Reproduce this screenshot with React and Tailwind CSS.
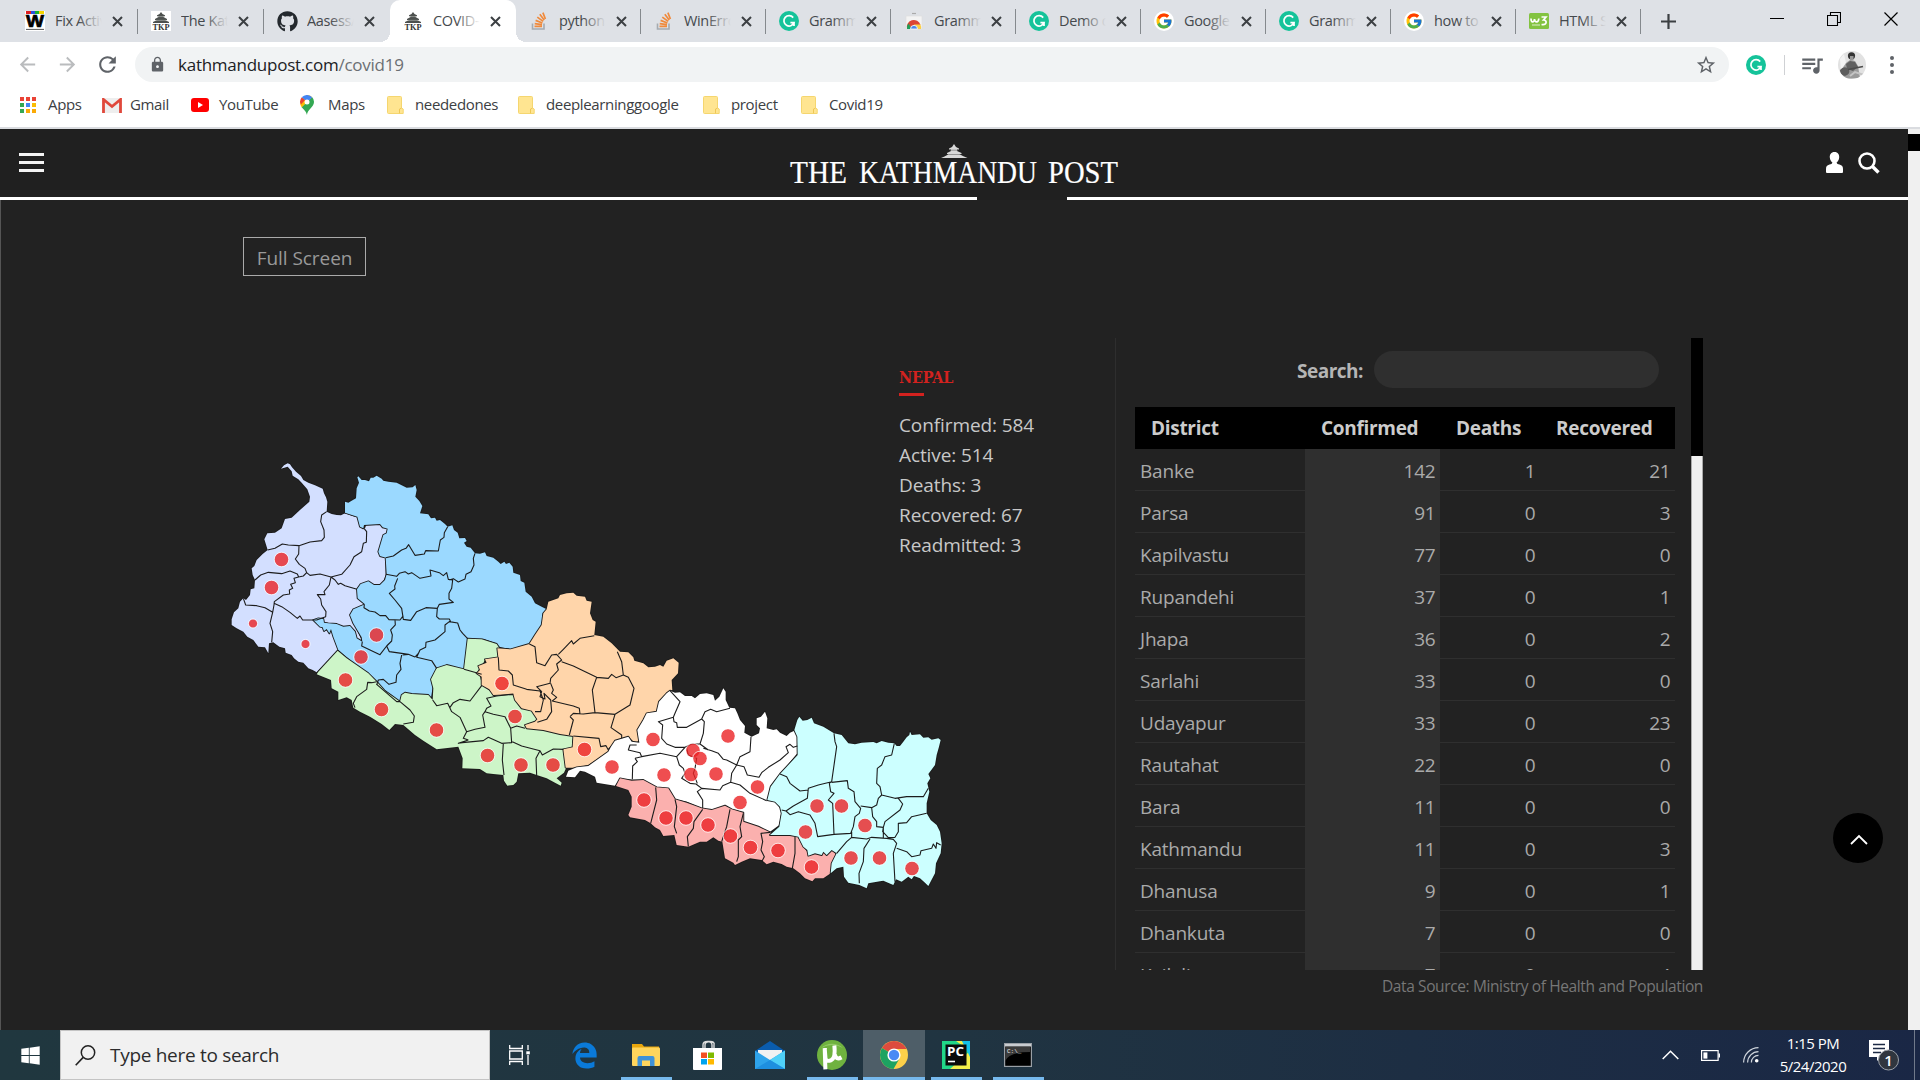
import React from "react";
import { FaGithub, FaEdgeLegacy, FaWindows } from "react-icons/fa6";
import { FcGoogle } from "react-icons/fc";
import { MdQueueMusic, MdLock, MdRefresh, MdStarBorder, MdArrowBack, MdArrowForward } from "react-icons/md";

const UI = "font-['Open_Sans','Noto_Sans',sans-serif]";

function Grammarly() {
  return (
    <svg width="20" height="20" viewBox="0 0 20 20">
      <circle cx="10" cy="10" r="10" fill="#15c39a" />
      <path d="M14.2 6.6A5.2 5.2 0 1 0 15 11.6H11.4M15 11.6V15" fill="none" stroke="#fff" strokeWidth="1.7" />
    </svg>
  );
}

function Stack() {
  return (
    <svg width="18" height="20" viewBox="0 0 18 20">
      <path d="M2.5 12.5V18H14V12.5" fill="none" stroke="#a5abb1" strokeWidth="1.6" />
      <path d="M4.5 15.4H12M4.7 12.6L12 13.6M5.6 9.4L12.4 12M7.3 6.1L13.2 10.4M9.8 3.3L14.2 9M12.9 1.6L15.4 8" stroke="#f08a3c" strokeWidth="1.7" />
    </svg>
  );
}

function Pagoda({ boxed }) {
  return (
    <svg width="20" height="20" viewBox="0 0 20 20">
      {boxed && <rect width="20" height="20" fill="#fff" />}
      <path d="M8.5 3L10 1L11.5 3L14 4.2V5.2H12.5V6L16 8V9H14L18 11V12H2V11L6 9H4V8L7.5 6V5.2H6V4.2Z" fill="#4c504e" />
      <path d="M7 5.6H13M5 9.4H15" stroke="#b5b8b6" strokeWidth=".6" />
      <text x="10" y="18.6" textAnchor="middle" textLength="17" lengthAdjust="spacingAndGlyphs" fontSize="8.5" fontFamily="Liberation Serif, serif" fontWeight="700" fill="#333">TKP</text>
    </svg>
  );
}

function WFavicon() {
  return (
    <svg width="20" height="20" viewBox="0 0 20 20">
      <rect width="20" height="20" fill="#fff" />
      <path d="M1 0H6V3H1Z" fill="#e02020" />
      <path d="M6 0H10V3H6Z" fill="#2b50e0" />
      <path d="M10 0H14V3H10Z" fill="#18b030" />
      <path d="M14 0H19V3H14Z" fill="#f4d500" />
      <path d="M1 18.4H19" stroke="#555" strokeWidth="1" />
      <text x="10" y="15.6" textAnchor="middle" fontSize="17" textLength="18" lengthAdjust="spacingAndGlyphs" fontFamily="Liberation Sans, sans-serif" fontWeight="700" stroke="#000" strokeWidth=".7">W</text>
    </svg>
  );
}

function WebStore() {
  return (
    <svg width="18" height="20" viewBox="0 0 18 20">
      <path d="M7 2.5H11" stroke="#aaa" strokeWidth="1.2" />
      <path d="M1 5H17V18H1Z" fill="#f3f3f3" stroke="#ddd" strokeWidth=".6" />
      <path d="M2 18A7 7 0 0 1 15.5 14L9 14Z" fill="#dc4535" />
      <path d="M2 18A7 7 0 0 1 3.4 12.5L7 18Z" fill="#1fa05a" />
      <path d="M9 13.5H15.4A7 7 0 0 1 16 18H10Z" fill="#fcd045" />
      <path d="M5.5 18A3.5 3.6 0 0 1 12.5 18Z" fill="#4a85ea" stroke="#fff" strokeWidth=".8" />
    </svg>
  );
}

function GoogleIcon() {
  return (
    <div className="flex size-5 items-center justify-center rounded-full bg-white">
      <FcGoogle size={18} />
    </div>
  );
}

function W3() {
  return (
    <svg width="20" height="20" viewBox="0 0 20 20">
      <rect y="2" width="20" height="16" rx="1.5" fill="#83c341" />
      <path d="M2 7.5C2 12 5 12 5.5 8C6 12 9.5 12 9.8 7.5M12.5 6H17L14.5 9C18.5 9 18 14.5 12.5 13.5" fill="none" stroke="#fff" strokeWidth="1.7" />
      <path d="M3 14H11" stroke="#dff0cc" strokeWidth="1" />
    </svg>
  );
}

const TABS = [
  ["Fix Activ", <WFavicon />],
  ["The Kath", <Pagoda boxed />],
  ["Aasess/", <FaGithub size={21} color="#24292e" />],
  ["COVID-", <Pagoda />, true],
  ["python -", <Stack />],
  ["WinErro", <Stack />],
  ["Gramm", <Grammarly />],
  ["Gramm", <WebStore />],
  ["Demo d", <Grammarly />],
  ["Google", <GoogleIcon />],
  ["Gramm", <Grammarly />],
  ["how to", <GoogleIcon />],
  ["HTML St", <W3 />],
];

function Cross() {
  return (
    <svg width="11" height="11" viewBox="0 0 11 11" className="shrink-0">
      <path d="M1 1L10 10M10 1L1 10" stroke="#3c4043" strokeWidth="2" />
    </svg>
  );
}

function TabStrip() {
  return (
    <div className="flex h-[42px] bg-[#dee1e6]">
      <div className="flex pl-3">
        {TABS.map(([title, icon, active], i) => {
          const fade = active ? "to-white" : "to-[#dee1e6]";
          const width = i < 4 ? "w-[126px]" : "w-[125px]";
          return (
            <div key={i} className={`relative flex shrink-0 items-center pl-3 ${width} ${active ? "rounded-t-[10px] bg-white" : ""}`}>
              {active && (
                <>
                  <div className="absolute bottom-0 -left-2.5 size-2.5 bg-[radial-gradient(circle_at_0_0,transparent_10px,white_10px)]" />
                  <div className="absolute -right-2.5 bottom-0 size-2.5 bg-[radial-gradient(circle_at_100%_0,transparent_10px,white_10px)]" />
                </>
              )}
              <div className="flex w-[22px] justify-center">{icon}</div>
              <div className="relative ml-[9px] w-[47px] overflow-hidden text-[14.5px] tracking-[-0.35px] whitespace-nowrap text-[#45494d]">
                {title}
                <div className={`absolute inset-y-0 right-0 w-6 bg-gradient-to-r from-transparent ${fade}`} />
              </div>
              <div className="ml-[10px]"><Cross /></div>
              {!active && i !== 2 && <div className="absolute right-0 h-[25px] w-px bg-[#85898d]" />}
            </div>
          );
        })}
      </div>
      <div className="flex flex-1 items-center">
        <svg width="17" height="17" viewBox="0 0 17 17" className="ml-[19px]">
          <path d="M8.5 1V16M1 8.5H16" stroke="#3c4043" strokeWidth="2.2" />
        </svg>
        <div className="mr-[22px] mb-[5px] ml-auto flex items-center gap-[43px]">
          <svg width="14" height="14" viewBox="0 0 14 14"><path d="M0 6.5H14" stroke="#000" /></svg>
          <svg width="14" height="14" viewBox="0 0 14 14"><path d="M.5 3.5H10.5V13.5H.5ZM3.5 3V.5H13.5V10.5H11" fill="none" stroke="#000" strokeWidth="1.1" /></svg>
          <svg width="14" height="14" viewBox="0 0 14 14"><path d="M.5 .5L13.5 13.5M13.5 .5L.5 13.5" stroke="#000" strokeWidth="1.2" /></svg>
        </div>
      </div>
    </div>
  );
}

function Avatar() {
  return (
    <svg width="28" height="28" viewBox="0 0 28 28">
      <defs><clipPath id="av"><circle cx="14" cy="14" r="14" /></clipPath></defs>
      <g clipPath="url(#av)">
        <rect width="28" height="28" fill="#e2e2e2" />
        <path d="M2 8L6 3L8 12L3 20Z" fill="#f3f3f3" />
        <path d="M5 28L4 18L8 12L12 9L17 10L20 15L22 27Z" fill="#9a9a9a" />
        <path d="M8 13L12 10L17 11L20 16L15 20L9 18Z" fill="#606060" />
        <path d="M2 19Q6 14 11 18Q13 23 7 25Q2 24 2 19Z" fill="#5c5c5c" />
        <path d="M10 18.5L25 15.5" stroke="#4d4d4d" strokeWidth="1.6" />
        <path d="M12 25L17 21L26 24" stroke="#c4c4c4" strokeWidth="2" fill="none" />
        <circle cx="13.5" cy="4.8" r="3.6" fill="#353535" />
        <path d="M12 5H15.5V9.5H12Z" fill="#999" />
      </g>
    </svg>
  );
}

function Toolbar() {
  return (
    <div className="flex h-[45px] items-center bg-white pr-[26px] pl-4 text-[#5f6368]">
      <MdArrowBack size={23} color="#babcbe" />
      <MdArrowForward size={23} color="#babcbe" className="ml-[17px]" />
      <MdRefresh size={25} className="ml-4" />
      <div className="ml-[15px] flex h-[35px] w-[1594px] items-center rounded-full bg-[#f1f3f4] pr-3 pl-[14px]">
        <MdLock size={17} />
        <div className="ml-3 text-[17px] tracking-[-0.25px] text-[#202124]">
          kathmandupost.com<span className="text-[#6b6f73]">/covid19</span>
        </div>
        <MdStarBorder size={22} className="ml-auto" />
      </div>
      <div className="ml-[17px]"><Grammarly /></div>
      <div className="ml-[18px] h-5 w-px bg-[#cfd1d4]" />
      <MdQueueMusic size={26} className="ml-[14px]" />
      <div className="ml-[13px]"><Avatar /></div>
      <div className="ml-auto flex flex-col gap-[3px]">
        <div className="size-[4px] rounded-full bg-[#5f6368]" />
        <div className="size-[4px] rounded-full bg-[#5f6368]" />
        <div className="size-[4px] rounded-full bg-[#5f6368]" />
      </div>
    </div>
  );
}

function Folder() {
  return (
    <svg width="17" height="18" viewBox="0 0 17 18">
      <path d="M.5 1.5Q.5 .5 1.5 .5H13.5Q14.5 .5 14.5 1.5V12L16.2 13V17.5H1.5Q.5 17.5 .5 16.5Z" fill="#ffe591" stroke="#f5d66f" />
      <path d="M12.5 17.3V13L14.5 12.2" fill="none" stroke="#efc756" />
    </svg>
  );
}

function AppsIcon() {
  const colors = ["#ea4335", "#ea4335", "#ea4335", "#34a853", "#4285f4", "#fbbc04", "#34a853", "#fbaa05", "#fbaa05"];
  return (
    <div className="grid grid-cols-3 gap-[2px]">
      {colors.map((c, i) => <div key={i} className="size-[4px]" style={{ background: c }} />)}
    </div>
  );
}

const BOOKMARKS = [
  ["Apps", "w-[82px]", <AppsIcon />],
  ["Gmail", "w-[89px]", (
    <svg width="20" height="15" viewBox="0 0 20 15">
      <rect width="20" height="15" rx="1" fill="#eee" />
      <path d="M1.5 15V1.5L10 8.5L18.5 1.5V15" fill="none" stroke="#e0483b" strokeWidth="2.8" />
    </svg>
  )],
  ["YouTube", "w-[109px]", (
    <svg width="18" height="14" viewBox="0 0 18 14">
      <rect width="18" height="14" rx="3" fill="#f00" /><path d="M7 4V10L12 7Z" fill="#fff" />
    </svg>
  )],
  ["Maps", "w-[87px]", (
    <svg width="14" height="20" viewBox="0 0 14 20">
      <path d="M7 20C7 15 14 12 14 7A7 7 0 0 0 12 2L1.5 12C4 15 6 16 7 20Z" fill="#34a853" />
      <path d="M0 7Q0 10 1.8 12.3L12 2Q10 0 7 0L2 4Z" fill="#fbbc04" />
      <path d="M0 7A7 7 0 0 1 1.8 2.2L5 5L1 9.5Z" fill="#ea4335" />
      <path d="M1.8 2.3A7 7 0 0 1 12.2 2.3L9 5.5L5 5Z" fill="#4285f4" />
      <circle cx="7" cy="7" r="2.5" fill="#fff" />
    </svg>
  )],
  ["neededones", "w-[131px]", <Folder />],
  ["deeplearninggoogle", "w-[185px]", <Folder />],
  ["project", "w-[98px]", <Folder />],
  ["Covid19", "w-[98px]", <Folder />],
];

function Bookmarks() {
  return (
    <div className="flex h-[42px] items-center border-b-2 border-[#dadce0] bg-white pb-1 pl-5">
      {BOOKMARKS.map(([label, width, icon]) => (
        <div key={label} className={`flex items-center ${width}`}>
          <div className="flex w-7 shrink-0">{icon}</div>
          <div className="-mt-px mb-px text-[15px] tracking-[-0.35px] text-[#3c4043]">{label}</div>
        </div>
      ))}
    </div>
  );
}

function SiteHeader() {
  const word = { fontFamily: "Liberation Serif, serif", fill: "#fff", stroke: "#fff", strokeWidth: 0.2, fontSize: 32.5, lengthAdjust: "spacingAndGlyphs" };
  return (
    <div className="flex h-[71px] flex-col bg-[#202020]">
      <div className="flex h-[68px] items-center pr-7 pb-px pl-[19px]">
        <div className="flex w-[25px] flex-col gap-[5px]">
          <div className="h-[3px] bg-[#f4f4f4]" />
          <div className="h-[3px] bg-[#f4f4f4]" />
          <div className="h-[3px] bg-[#f4f4f4]" />
        </div>
        <svg width="330" height="42" viewBox="0 0 330 42" className="ml-[745px]">
          <path d="M163 5L165 2L167 5L170 6.5V7.5H168V9L172.5 11V12H170L175 14.5L178.5 16H152L155.500 14.500L160 12H158V11L162 9V7.500H160V6.500Z" fill="#d8d8d8" />
          <path d="M161 8.2H169M159.500 12.500H171" stroke="#777" strokeWidth=".7" />
          <text x="1" y="40.5" textLength="57" {...word}>THE</text>
          <text x="70" y="40.5" textLength="178" {...word}>KATHMANDU</text>
          <text x="259" y="40.5" textLength="70" {...word}>POST</text>
        </svg>
        <svg width="17" height="21" viewBox="0 0 17 21" className="ml-auto">
          <path d="M8.5 0C12 0 13.4 2.6 13.2 5.5C13 8 11.8 9.5 10.6 10.6C10.8 12 12 12.2 13.5 12.6C16 13.3 17 14.5 17 17V20Q17 21 16 21H1Q0 21 0 20V17C0 14.5 1 13.3 3.5 12.6C5 12.2 6.2 12 6.4 10.6C5.2 9.5 4 8 3.8 5.5C3.6 2.6 5 0 8.5 0Z" fill="#fff" />
        </svg>
        <svg width="22" height="22" viewBox="0 0 22 22" className="ml-[15px]">
          <circle cx="9" cy="9" r="7.5" fill="none" stroke="#fff" strokeWidth="2.6" />
          <path d="M14.5 14.5L20.5 20.5" stroke="#fff" strokeWidth="3.4" />
        </svg>
      </div>
      <div className="flex h-[3px] justify-between">
        <div className="w-[977px] bg-white" />
        <div className="w-[841px] bg-white" />
      </div>
    </div>
  );
}

/* Province outlines and district boundaries, three units to the pixel. */
const WEST = {
  sudurpashchim:
    "M183,56 L192,46 L203,40 L210,43 L216,52 L228,65 L243,78 L250,90 L265,98 L285,106 L308,116 L312,130 L318,142 L322,155 L320,185 L335,192 L350,195 L363,196 L375,190 L398,198 L415,203 L420,230 L435,235 L440,222 L480,221 L503,236 L500,250 L490,255 L476,305 L497,323 L497,375 L490,395 L480,405 L462,405 L445,394 L422,402 L411,418 L433,463 L400,478 L390,495 L427,575 L335,537 L340,560 L355,600 L290,667 L278,660 L265,655 L250,638 L235,635 L222,625 L215,615 L197,608 L195,595 L178,590 L160,577 L147,580 L145,610 L135,592 L115,590 L100,570 L82,560 L70,545 L50,535 L35,525 L35,508 L42,487 L55,475 L60,455 L70,445 L78,450 L90,435 L92,418 L103,415 L105,390 L98,375 L95,355 L103,348 L110,330 L128,312 L143,300 L133,268 L142,250 L165,248 L185,235 L195,207 L215,203 L240,180 L268,155 L270,140 L262,118 L245,98 L235,88 L218,77 L215,64 L203,50Z",
  karnali:
    "M375,155 L385,158 L395,152 L408,145 L410,115 L417,98 L412,82 L415,79 L425,90 L435,90 L447,94 L452,83 L460,83 L470,77 L485,86 L490,92 L505,95 L530,98 L560,113 L578,112 L586,105 L590,120 L586,140 L598,153 L607,168 L600,190 L625,193 L633,205 L645,203 L650,212 L660,210 L675,222 L683,230 L697,226 L702,240 L713,248 L718,265 L735,264 L740,273 L732,278 L740,290 L752,293 L765,310 L780,311 L795,307 L800,318 L820,323 L835,335 L842,342 L853,335 L858,342 L868,338 L878,350 L880,368 L900,375 L902,393 L913,398 L917,425 L935,440 L945,460 L965,470 L980,478 L968,490 L965,525 L945,555 L930,580 L900,592 L870,598 L838,590 L828,580 L790,566 L743,566 L732,658 L707,655 L680,645 L668,658 L650,655 L633,685 L638,712 L632,750 L600,738 L548,735 L540,755 L515,735 L470,705 L450,680 L355,600 L340,560 L333,537 L328,550 L320,537 L312,543 L308,532 L300,530 L280,510 L295,505 L310,507 L312,518 L325,520 L350,522 L370,530 L390,528 L405,545 L410,565 L427,575 L425,562 L400,520 L390,495 L400,478 L435,463 L413,445 L411,418 L422,402 L445,394 L462,405 L480,405 L495,390 L500,373 L497,323 L480,318 L475,305 L490,255 L500,250 L503,236 L488,232 L480,222 L432,225 L430,235 L420,230 L412,200 L375,188Z",
  lines:
    "M320,185 L305,195 L302,215 L312,240 L313,262 L305,272 L270,276 L237,287 L205,285 L187,282 L165,295 L143,300 M237,287 L236,312 L226,327 L238,343 L255,355 L260,368 L270,376 L300,372 L333,381 L365,373 L390,345 L402,320 L425,305 L430,280 L439,277 L440,245 L432,235 M105,390 L122,375 L145,367 L185,371 L210,363 L232,372 L236,381 L250,378 L260,368 M236,381 L222,385 L226,398 L212,403 L218,415 L208,420 L209,432 L190,435 L163,455 L162,465 M70,445 L77,465 L110,467 L135,473 L158,487 L150,520 L158,545 L155,577 M158,487 L162,465 M162,460 L185,470 L210,487 L232,505 L240,498 L248,510 L290,510 M333,381 L328,405 L312,425 L315,434 L292,434 L302,447 L305,465 L318,485 L317,500 L290,510 M333,381 L345,390 L355,403 L362,400 L375,407 L411,418 M497,323 L520,318 L545,300 L558,295 L566,284 L585,316 L613,312 L617,302 L655,303 L661,270 L672,262 L673,248 L683,230 M765,310 L760,325 L762,345 L753,365 L738,373 L735,387 L715,396 L700,386 L688,390 M498,373 L530,379 L538,370 L555,365 L565,372 L575,368 L600,385 L633,378 L630,360 L658,368 L670,377 L680,368 L685,388 L698,390 L695,415 L687,430 L687,447 L700,457 L658,463 L652,475 L618,473 L590,485 L572,511 L550,508 L545,475 L525,450 L508,430 L525,417 L524,408 L533,385 M433,463 L432,473 L448,483 L465,486 L480,497 L497,497 L507,509 L540,510 L550,497 M525,510 L526,525 L512,540 L517,555 L515,573 L500,588 L480,614 L425,588 L427,575 M500,588 L508,605 L545,610 L565,613 L585,621 L593,612 L590,622 L635,632 L650,655 M590,622 L600,600 L617,592 L618,577 L645,570 L675,545 L675,525 L688,515 L713,519 L720,540 L728,550 L743,566 M652,475 L650,500 L658,507 L688,507 L692,515 M545,615 L540,640 L543,658 L530,675 L528,697 L507,703 L490,688 L475,690 L470,705 M565,613 L548,615",
};

const MID = {
  lumbini:
    "M113,92 L140,115 L205,160 L230,185 L255,213 L300,245 L305,225 L315,218 L335,222 L385,225 L398,240 L400,205 L393,178 L410,145 L440,135 L492,148 L503,56 L545,58 L590,72 L598,85 L595,112 L555,118 L550,130 L535,150 L545,190 L580,222 L640,222 L645,240 L665,265 L705,275 L715,300 L675,315 L680,325 L730,330 L820,348 L815,385 L790,388 L800,440 L792,458 L770,475 L785,488 L782,497 L765,488 L740,475 L710,465 L690,458 L655,460 L650,485 L640,495 L622,497 L612,482 L610,465 L580,462 L560,460 L540,447 L487,445 L488,415 L475,380 L410,388 L370,362 L345,345 L310,315 L285,312 L268,330 L245,312 L210,290 L180,275 L160,263 L155,240 L140,232 L115,240 L115,215 L95,205 L93,180 L50,163 L55,155 Z",
  gandaki:
    "M740,-32 L745,-55 L775,-65 L780,-75 L800,-80 L820,-82 L830,-73 L855,-70 L860,-58 L875,-55 L870,-20 L878,0 L887,5 L883,45 L910,50 L935,70 L960,95 L985,97 L1000,112 L1003,122 L1030,130 L1045,142 L1065,140 L1080,135 L1090,140 L1100,122 L1120,115 L1136,128 L1134,160 L1115,180 L1117,210 L1100,220 L1080,250 L1070,275 L1040,285 L1035,305 L1013,330 L1023,360 L1005,368 L985,350 L965,355 L925,385 L925,395 L865,435 L830,443 L797,443 L790,388 L818,382 L820,348 L780,342 L730,330 L680,325 L675,315 L705,305 L712,298 L695,272 L665,265 L645,240 L640,222 L580,225 L568,208 L545,195 L545,170 L530,160 L540,150 L535,138 L560,128 L555,118 L575,115 L595,112 L592,85 L632,88 L688,72 L705,45 L725,15 L730,-20Z",
  lines:
    "M230,185 L215,188 L203,187 L200,208 L170,230 L160,250 L165,263 M230,193 L290,245 L300,245 L330,270 L343,288 L340,307 L310,312 M398,240 L410,257 L443,250 L455,275 L480,292 L500,335 L490,355 L505,360 M450,262 L460,248 L480,238 L510,243 L545,197 M555,275 L548,285 L555,322 L525,328 L500,335 M505,360 L475,370 L487,368 L550,362 L565,352 L605,370 L635,368 L632,325 L615,290 L580,283 L555,275 L560,265 L573,258 L560,235 L590,228 L640,222 M632,325 L650,318 L675,325 M637,365 L665,378 L720,392 L727,405 L760,387 L790,388 M610,370 L607,420 L612,465 M720,392 L708,415 L710,465 M492,148 L545,163 M595,112 L597,150 L625,153 L637,165 L640,195 L680,208 L720,213 L730,240 L722,275 L705,275 M688,72 L705,80 L710,128 L735,137 L755,105 L770,103 L785,120 L770,132 L775,150 L752,175 L750,190 L710,200 L725,215 L720,230 L735,237 L732,220 L752,240 L755,275 L740,298 L712,307 M752,190 L760,210 L755,220 L770,232 L757,243 L820,258 L838,265 L840,282 M775,103 L790,88 L815,62 L820,72 L840,55 L883,47 M785,125 L820,138 L890,172 L925,175 L935,163 L948,173 L970,165 L965,125 L952,95 M970,165 L985,172 L1002,205 L990,255 L945,283 L885,278 L877,210 L890,172 M810,290 L820,280 L850,282 L885,278 M810,290 L820,300 L808,345 M945,283 L933,323 L965,345 L965,355 M820,348 L897,355 L902,380 L918,377 L925,390",
};

const EAST = {
  bagmati:
    "M18,410 L25,392 L50,382 L85,378 L145,335 L153,320 L165,302 L205,290 L215,305 L238,308 L232,270 L250,240 L260,220 L290,215 L297,185 L320,160 L330,152 L345,158 L360,157 L375,168 L395,168 L405,175 L420,162 L440,160 L460,165 L465,182 L478,170 L490,145 L497,155 L497,180 L508,203 L525,205 L532,220 L540,240 L555,258 L553,278 L575,290 L597,280 L600,265 L590,255 L590,235 L603,230 L615,215 L622,235 L620,265 L640,270 L650,268 L660,278 L680,288 L690,278 L703,272 L712,285 L712,340 L660,402 L630,440 L625,480 L645,487 L665,510 L658,555 L630,575 L590,560 L550,545 L550,520 L515,508 L495,497 L455,510 L425,505 L380,485 L345,478 L325,445 L287,442 L250,420 L180,418 L165,437 L110,428 L105,410 L75,395 L60,392 L45,412Z",
  madhesh:
    "M180,415 L215,422 L250,420 L290,442 L325,445 L345,478 L380,488 L425,505 L455,510 L495,497 L515,508 L550,518 L550,545 L595,560 L630,577 L640,585 L712,588 L730,620 L745,640 L790,640 L815,630 L830,645 L815,670 L812,700 L790,715 L765,715 L757,724 L735,715 L720,700 L700,685 L680,680 L665,672 L640,665 L620,673 L605,660 L570,655 L545,665 L525,675 L520,668 L495,655 L487,605 L475,602 L460,592 L440,605 L420,605 L385,620 L350,615 L343,585 L310,588 L300,570 L285,562 L272,550 L255,540 L210,532 L205,525 L215,500 L215,470 L205,450 L168,438Z",
  koshi:
    "M712,240 L718,230 L728,242 L742,240 L755,233 L762,250 L790,260 L822,280 L845,285 L865,310 L885,313 L905,308 L940,306 L950,310 L965,303 L985,308 L1003,310 L1010,318 L1020,318 L1030,305 L1040,292 L1048,285 L1050,275 L1055,285 L1080,283 L1090,293 L1105,292 L1115,299 L1135,295 L1142,300 L1137,320 L1130,345 L1125,375 L1105,402 L1111,415 L1102,430 L1108,455 L1100,490 L1100,520 L1112,540 L1130,555 L1140,575 L1145,610 L1142,640 L1128,670 L1125,700 L1105,738 L1095,728 L1080,715 L1062,708 L1055,718 L1045,710 L1025,725 L1008,718 L1000,735 L970,722 L960,724 L925,730 L920,745 L898,735 L865,728 L852,710 L850,680 L830,685 L812,700 L815,670 L830,640 L815,630 L800,645 L790,635 L785,645 L765,640 L745,647 L742,630 L730,620 L715,590 L690,585 L630,585 L658,560 L665,520 L660,500 L645,485 L622,480 L632,440 L660,402 L713,345 L712,290 L703,270Z",
  lines:
    "M330,152 L360,185 L345,220 L340,232 L295,245 L308,255 L305,295 L320,312 L345,322 L375,322 L350,350 L300,340 L245,350 L240,338 L205,330 L210,315 L230,315 M340,232 L342,245 L350,248 L352,262 L380,262 L425,237 L435,215 L452,208 L470,215 L510,205 M425,237 L433,245 L430,280 L420,312 L445,330 M375,322 L395,312 L420,312 M350,350 L358,375 L370,385 L375,400 L365,415 L390,430 L408,432 L425,445 L480,450 L488,437 L512,427 L515,400 L530,375 L500,360 L490,358 L475,340 L455,332 L430,325 M225,355 L232,365 L218,378 L217,418 M225,355 L245,350 M425,445 L412,455 L428,480 L428,505 M380,325 L385,345 L410,355 L405,385 L400,400 L412,430 M530,375 L540,350 L570,335 L573,290 M530,375 L552,380 L562,405 L597,412 L605,398 L625,382 L660,360 L685,338 L678,320 L690,313 L700,322 L712,318 M512,427 L540,435 L570,460 L620,482 M287,442 L290,480 L272,550 M345,478 L350,500 L343,560 L350,580 M428,508 L402,545 L400,565 L382,590 L385,620 M510,508 L500,560 L485,605 M550,520 L540,560 L545,590 L535,600 L535,650 L530,665 M630,577 L603,580 L608,605 L603,630 L613,650 L605,665 M705,590 L705,640 L697,685 M822,280 L825,305 L830,320 L815,425 L775,435 L745,445 L742,475 L700,498 L678,513 L665,510 M660,402 L680,410 L690,430 L720,453 L745,450 M815,425 L808,430 L812,455 L822,460 L805,480 L818,490 L822,583 L773,590 L765,550 L750,525 L715,515 L690,524 L678,513 M815,427 L862,422 L865,445 L882,455 L885,485 L902,505 L898,520 L885,530 L880,560 L872,580 L822,583 M902,498 L935,503 L950,495 L955,475 L965,465 L1005,475 L1040,470 L1090,470 L1105,445 M965,465 L960,440 L950,430 L952,385 L965,375 L975,350 L995,345 L1003,310 M935,503 L938,530 L950,545 L950,560 L970,562 L975,545 L1020,510 L1028,492 L1015,475 M970,562 L968,575 L985,593 L1005,592 L1015,575 L1015,550 L1040,548 L1055,530 L1100,520 M875,575 L875,592 L860,605 L830,640 M875,592 L920,597 L935,592 L980,595 L1000,598 L1010,610 L1000,640 L1005,725 M970,562 L970,593 M930,597 L912,625 L910,665 L897,700 L898,730 M1010,625 L1040,635 L1055,650 L1080,645 L1083,632 L1115,625 L1120,612 L1128,625 L1130,608 L1142,615",
};

// [x, y, radius] in page pixels
const CASES = [
  [281.5, 559.5, 7], [271.5, 587.5, 7], [253, 623.5, 4.3], [305.5, 644, 4.3], [376.5, 635, 7], [361, 657, 7], [345.5, 680, 7],
  [381.5, 709.5, 7], [436.5, 730, 7], [487.5, 755.5, 7], [521, 765, 7], [553, 765, 7], [502, 683.5, 7], [515, 716.5, 7], [584.5, 749.5, 7],
  [612, 767, 7], [653, 739.5, 7], [664, 775, 7], [693, 750.5, 7], [700, 758.5, 7], [728, 736, 7], [691, 774.5, 7], [716, 774, 7], [757.5, 787, 7], [740, 802.5, 7],
  [644, 800, 7], [666, 818, 7], [686, 818, 7], [708, 825, 7], [730.5, 836, 7], [750.5, 847.5, 7], [778, 850.5, 7], [811.5, 867, 7],
  [805.5, 832, 7], [817, 806, 7], [841.5, 806, 7], [865, 825.5, 7], [851, 858, 7], [879.5, 858, 7], [912, 868.5, 7],
];

function Province({ d, fill }) {
  return <path d={d} fill={fill} className="[paint-order:stroke]" strokeWidth="5.5" />;
}

function NepalMap() {
  return (
    <svg width="730" height="450" viewBox="220 450 730 450">
      <g stroke="#1c1c1c" strokeWidth="3.3" strokeLinejoin="round">
        <g transform="translate(220 450) scale(.33333)">
          <Province d={WEST.sudurpashchim} fill="#d3dfff" />
          <Province d={WEST.karnali} fill="#9bd9ff" />
        </g>
        <g transform="translate(300 620) scale(.33333)">
          <Province d={MID.lumbini} fill="#cdf5c8" />
          <Province d={MID.gandaki} fill="#ffd5aa" />
        </g>
        <g transform="translate(560 640) scale(.33333)">
          <Province d={EAST.bagmati} fill="#fff" />
          <Province d={EAST.madhesh} fill="#fbb0ae" />
          <Province d={EAST.koshi} fill="#ccffff" />
        </g>
        <path d={WEST.lines} fill="none" transform="translate(220 450) scale(.33333)" />
        <path d={MID.lines} fill="none" transform="translate(300 620) scale(.33333)" />
        <path d={EAST.lines} fill="none" transform="translate(560 640) scale(.33333)" />
      </g>
      {CASES.map(([x, y, r], i) => (
        <g key={i}>
          <circle cx={x} cy={y} r={r} fill="#eb2224" fillOpacity=".8" />
          <circle cx={x} cy={y} r={r + 0.3} fill="none" stroke="#fff" strokeOpacity=".8" strokeWidth=".9" />
        </g>
      ))}
    </svg>
  );
}

const ROWS = [
  ["Banke", 142, 1, 21], ["Parsa", 91, 0, 3], ["Kapilvastu", 77, 0, 0], ["Rupandehi", 37, 0, 1],
  ["Jhapa", 36, 0, 2], ["Sarlahi", 33, 0, 0], ["Udayapur", 33, 0, 23], ["Rautahat", 22, 0, 0],
  ["Bara", 11, 0, 0], ["Kathmandu", 11, 0, 3], ["Dhanusa", 9, 0, 1], ["Dhankuta", 7, 0, 0], ["Kailali", 7, 0, 4],
];

const COLS = "grid grid-cols-[170px_135px_100px_135px]";

function DistrictPanel() {
  return (
    <div className="flex h-[632px] w-[588px] overflow-hidden border-l border-[#2e2e2e]">
      <div className="w-[575px] pl-[19px]">
        <div className="flex h-[69px] items-start pt-[13px] pl-[162px]">
          <div className="mt-2 w-[77px] text-[19px] leading-6 font-bold tracking-[-0.5px] text-[#b5b5b5]">Search:</div>
          <div className="h-[37px] w-[285px] rounded-full bg-[#2f2f2f]" />
        </div>
        <div className="w-[540px]">
          <div className={`${COLS} h-[42px] items-center bg-black pt-px text-[19px] font-bold tracking-[-0.3px] text-[#ccc]`}>
            <div className="pl-4">District</div>
            <div className="pl-4">Confirmed</div>
            <div className="pl-4">Deaths</div>
            <div className="pl-4">Recovered</div>
          </div>
          {ROWS.map(([name, c, d, r]) => (
            <div key={name} className={`${COLS} h-[42px] border-b border-[#2f2f2f] text-right text-[19px] leading-[45px] tracking-[-0.2px] text-[#aaa]`}>
              <div className="h-[41px] pl-[5px] text-left">{name}</div>
              <div className="h-[42px] bg-[#2f2f2f] pr-[4.5px]">{c}</div>
              <div className="h-[41px] pr-[4.5px]">{d}</div>
              <div className="h-[41px] pr-[4.5px]">{r}</div>
            </div>
          ))}
        </div>
      </div>
      <div className="ml-auto w-3 shrink-0 border-x border-[#aaa] bg-[#f0f0f0]">
        <div className="-mx-px h-[118px] bg-black" />
      </div>
    </div>
  );
}

function Page() {
  return (
    <div className="relative flex h-[901px] bg-[#222]">
      <div className="flex w-[1908px] flex-col">
        <SiteHeader />
        <div className="flex-1 border-l border-[#555] pl-[242px]">
          <div className="mt-[37px] flex h-[39px] w-[123px] items-center justify-center border border-[#aaa] pt-[3px] text-[19px] tracking-[-0.05px] text-[#999]">
            Full Screen
          </div>
          <div className="mt-[62px] -ml-[23px] flex h-[632px]">
            <div className="mt-28 w-[679px]"><NepalMap /></div>
            <div className="w-[216px] pt-[28px] text-[19px] text-[#c8c8c8]">
              <div className="font-['DejaVu_Serif_Condensed','DejaVu_Serif',serif] text-[16px] leading-6 font-bold font-stretch-condensed tracking-[-0.2px] text-[#d3221f]">NEPAL</div>
              <div className="mt-[3px] mb-[13px] h-[3px] w-[25px] bg-[#d3221f]" />
              {["Confirmed: 584", "Active: 514", "Deaths: 3", "Recovered: 67", "Readmitted: 3"].map((s) => (
                <div key={s} className="h-[30px] leading-[32px] tracking-[-0.1px] whitespace-nowrap">{s}</div>
              ))}
            </div>
            <DistrictPanel />
          </div>
          <div className="w-[1460px] pt-[3px] text-right text-[15.5px] leading-[26px] tracking-[-0.38px] text-[#777]">
            Data Source: Ministry of Health and Population
          </div>
        </div>
      </div>
      <div className="w-3 bg-[#f0f0f0] pt-[5px]">
        <div className="h-[17px] bg-black" />
      </div>
      <div className="absolute top-[684px] left-[1833px] flex size-[50px] items-center justify-center rounded-full bg-black pt-[3px] pl-[2px]">
        <svg width="18" height="11" viewBox="0 0 18 11"><path d="M1 10L9 2L17 10" fill="none" stroke="#fff" strokeWidth="1.8" /></svg>
      </div>
    </div>
  );
}

function ExplorerIcon() {
  return (
    <svg width="29" height="24" viewBox="0 0 29 24">
      <path d="M0 1H10L12 3.5H27V7H0Z" fill="#e8a60c" />
      <rect y="4.5" width="28" height="18.5" rx="1" fill="#ffd55c" />
      <path d="M5.5 23V15Q5.5 13 7.5 13H20.5Q22.5 13 22.5 15V23H18V17.5H10V23Z" fill="#3f92d8" />
    </svg>
  );
}

function StoreIcon() {
  return (
    <svg width="30" height="30" viewBox="0 0 30 30">
      <path d="M10 9V5Q10 1.5 14.5 1.5T19 5V9M12 9V5Q12 1.5 17 1.5T21 5V9" fill="none" stroke="#ddd" strokeWidth="1.4" />
      <path d="M0 8H29V29Q29 30 28 30H1Q0 30 0 29Z" fill="#fff" />
      <path d="M8 12.5H14V18H8Z" fill="#f25022" /><path d="M15 12.5H21V18H15Z" fill="#7fba00" />
      <path d="M8 19H14V24.5H8Z" fill="#00a4ef" /><path d="M15 19H21V24.5H15Z" fill="#ffb900" />
    </svg>
  );
}

function MailIcon() {
  return (
    <svg width="30" height="28" viewBox="0 0 30 28">
      <path d="M0 10L15 0L30 10V14H0Z" fill="#0a5cad" />
      <path d="M3 9H27V17L15 22L3 17Z" fill="#f2f2f2" />
      <path d="M0 9.5L15 19L30 9.5V28H0Z" fill="#2ea3ea" />
      <path d="M30 9.5V28L15 19Z" fill="#4fd0f8" />
      <path d="M0 28L15 19L30 28Z" fill="#1e8fdf" />
    </svg>
  );
}

function TorrentIcon() {
  return (
    <svg width="30" height="30" viewBox="0 0 30 30">
      <circle cx="15" cy="15" r="15" fill="#6fb23f" />
      <path d="M4 8A14 11 0 0 1 26 8Q15 2 4 8Z" fill="#94ca68" />
      <path d="M9 7L6 28M9 7L8 17Q8 21 13 20Q18 19 19 6M18 15Q18 21 24 19" transform="rotate(-10 15 15)" fill="none" stroke="#fff" strokeWidth="4" />
    </svg>
  );
}

function ChromeIcon() {
  return (
    <svg width="28" height="28" viewBox="0 0 28 28">
      <circle cx="14" cy="14" r="14" fill="#fdd04a" />
      <path d="M14 14L1.9 7A14 14 0 0 1 26.1 7L26.5 8H14Z" fill="#dd4b3e" />
      <path d="M14 14L1.9 7A14 14 0 0 0 13.5 28L19.5 17.5Z" fill="#1da362" />
      <circle cx="14" cy="14" r="6.6" fill="#fff" />
      <circle cx="14" cy="14" r="5.2" fill="#4a8af4" />
    </svg>
  );
}

function PyCharmIcon() {
  return (
    <svg width="28" height="28" viewBox="0 0 28 28">
      <rect width="28" height="28" fill="#21d789" />
      <path d="M14 0H20L28 14V28H8L28 10Z" fill="#f3ee4a" />
      <path d="M20 0H28V16Z" fill="#14bfe8" />
      <rect x="3.5" y="3.5" width="21" height="21" fill="#0a0a0a" />
      <text x="5" y="15" fontSize="11.5" textLength="17" lengthAdjust="spacingAndGlyphs" fontWeight="700" fontFamily="Open Sans, sans-serif" fill="#fff">PC</text>
      <path d="M6 20.5H13" stroke="#fff" strokeWidth="1.6" />
    </svg>
  );
}

function TerminalIcon() {
  return (
    <svg width="28" height="24" viewBox="0 0 28 24">
      <rect x=".6" y=".6" width="26.8" height="22.8" fill="#000" stroke="#9aa0a6" strokeWidth="1.2" />
      <path d="M1 1H27V3.5H1Z" fill="#c9ccd0" />
      <path d="M1.2 4H26V9Q5 9 1.2 18Z" fill="#3b3b3b" />
      <text x="3" y="9.5" fontSize="6" fontFamily="Liberation Mono, monospace" fill="#eee">C:\_</text>
    </svg>
  );
}

const TASKS = [
  [<FaEdgeLegacy size={27} color="#0a7ad9" />, ""],
  [<ExplorerIcon />, "run"],
  [<StoreIcon />, ""],
  [<MailIcon />, ""],
  [<TorrentIcon />, "run"],
  [<ChromeIcon />, "active"],
  [<PyCharmIcon />, "run"],
  [<TerminalIcon />, "run"],
];

function Taskbar() {
  return (
    <div className="flex h-[50px] bg-gradient-to-r from-[#20373f] via-[#203441] to-[#1a2745]">
      <div className="flex w-[60px] items-center justify-center"><FaWindows size={21} color="#fff" /></div>
      <div className="flex w-[430px] items-center border border-[#c4c4c4] bg-[#f1f1f1] pl-3.5">
        <svg width="21" height="21" viewBox="0 0 21 21">
          <circle cx="13" cy="7.5" r="6.7" fill="none" stroke="#222" strokeWidth="1.5" />
          <path d="M8.2 12.4L.7 20.2" stroke="#222" strokeWidth="1.6" />
        </svg>
        <div className="ml-[14px] text-[19px] tracking-[-0.3px] text-[#2c2c2c]">Type here to search</div>
      </div>
      <div className="flex w-[63px] items-center justify-center">
        <svg width="21" height="20" viewBox="0 0 21 20" className="mr-1">
          <path d="M.7 0V3.5H13.3V0M.7 20V16.5H13.3V20M.7 6H13.3V14H.7ZM19 0V5M19 10V20" fill="none" stroke="#fff" strokeWidth="1.3" />
          <rect x="17.3" y="6.3" width="3.5" height="3" fill="#fff" />
        </svg>
      </div>
      {TASKS.map(([icon, state], i) => (
        <div key={i} className={`relative flex w-[62px] items-center justify-center ${state === "active" ? "bg-[#4e5e68]" : ""}`}>
          {icon}
          {state === "run" && <div className="absolute bottom-0 h-[3px] w-[51px] bg-[#76b9ed]" />}
          {state === "active" && <div className="absolute bottom-0 h-[3px] w-full bg-[#76b9ed]" />}
        </div>
      ))}
      <div className="ml-auto flex items-center text-white">
        <svg width="17" height="10" viewBox="0 0 17 10"><path d="M.7 9L8.5 1.2L16.3 9" fill="none" stroke="#fff" strokeWidth="1.5" /></svg>
        <svg width="19" height="11" viewBox="0 0 19 11" className="ml-[22px]">
          <rect x=".6" y=".6" width="16.5" height="9.8" fill="none" stroke="#fff" strokeWidth="1.2" /><rect x="2.4" y="2.4" width="4" height="6.2" fill="#fff" /><rect x="17.5" y="3.5" width="1.5" height="4" fill="#fff" />
        </svg>
        <svg width="16" height="16" viewBox="0 0 16 16" className="ml-[23px]">
          <path d="M.6 15.5A15 15 0 0 1 15.5 .6M4.6 15.5A11 11 0 0 1 15.5 4.6M8.4 15.5A7 7 0 0 1 15.5 8.4" fill="none" stroke="#cfd5dc" strokeWidth="1.2" /><circle cx="13.7" cy="13.8" r="1.8" fill="#fff" />
        </svg>
        <div className="ml-[15px] w-[78px] text-center text-[15px] leading-[23px] tracking-[-0.5px] whitespace-nowrap">
          <div>1:15 PM</div>
          <div>5/24/2020</div>
        </div>
        <svg width="34" height="34" viewBox="0 0 34 34" className="ml-4">
          <path d="M1 2H21V19H13L9 23V19H1Z" fill="#fff" />
          <path d="M5 6.5H17M5 10.5H17M5 14.5H13" stroke="#1c2a45" strokeWidth="1.3" />
          <circle cx="20.5" cy="22" r="10" fill="#30363f" stroke="#9aa0a8" strokeWidth="1" />
          <text x="20.5" y="27.5" textAnchor="middle" fontSize="15" fontWeight="600" fontFamily="Open Sans, sans-serif" fill="#fff">1</text>
        </svg>
        <div className="ml-3 h-[50px] w-[6px] border-l border-[#70798a]" />
      </div>
    </div>
  );
}

export default function App() {
  return (
    <div className={`h-[1080px] w-[1920px] overflow-hidden bg-[#222] ${UI}`}>
      <TabStrip />
      <Toolbar />
      <Bookmarks />
      <Page />
      <Taskbar />
    </div>
  );
}
